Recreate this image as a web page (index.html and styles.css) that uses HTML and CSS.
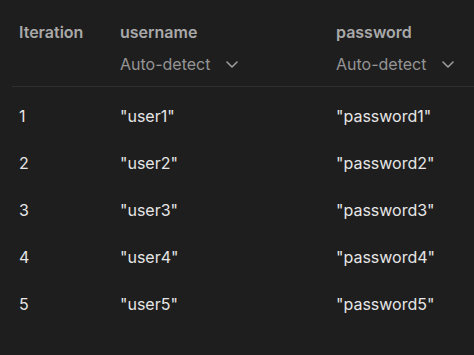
FILE: index.html
```html
<!DOCTYPE html>
<html lang="en">
<head>
    <meta charset="UTF-8">
    <meta name="viewport" content="width=device-width, initial-scale=1.0">
    <title>Iterations</title>
    <link rel="stylesheet" href="styles.css">
</head>
<body>
    <div class="table">
        <div class="head">
            <div class="cell">
                <div class="col-name">Iteration</div>
            </div>
            <div class="cell">
                <div class="col-name">username</div>
                <div class="detect">Auto-detect
                    <svg class="chevron" width="12" height="7" viewBox="0 0 12 7"><path d="M1 1l5 5 5-5" fill="none" stroke="currentColor" stroke-width="1.5" stroke-linecap="round" stroke-linejoin="round"/></svg>
                </div>
            </div>
            <div class="cell">
                <div class="col-name">password</div>
                <div class="detect">Auto-detect
                    <svg class="chevron" width="12" height="7" viewBox="0 0 12 7"><path d="M1 1l5 5 5-5" fill="none" stroke="currentColor" stroke-width="1.5" stroke-linecap="round" stroke-linejoin="round"/></svg>
                </div>
            </div>
        </div>
        <div class="rows">
            <div class="row"><div class="cell">1</div><div class="cell">"user1"</div><div class="cell">"password1"</div></div>
            <div class="row"><div class="cell">2</div><div class="cell">"user2"</div><div class="cell">"password2"</div></div>
            <div class="row"><div class="cell">3</div><div class="cell">"user3"</div><div class="cell">"password3"</div></div>
            <div class="row"><div class="cell">4</div><div class="cell">"user4"</div><div class="cell">"password4"</div></div>
            <div class="row"><div class="cell">5</div><div class="cell">"user5"</div><div class="cell">"password5"</div></div>
        </div>
    </div>
</body>
</html>
```
FILE: styles.css
```css
body {
    margin: 0;
    background-color: #1e1e1e;
    font-family: 'Inter', 'Liberation Sans', sans-serif;
    font-size: 16px;
    overflow: hidden;
}
.table {
    padding-left: 12px;
}
.head,
.row {
    display: grid;
    grid-template-columns: 101px 216px 1fr;
}
.head {
    padding: 22px 0 12px;
    border-bottom: 1px solid #2f2f2f;
}
.rows {
    padding-top: 5px;
}
.cell {
    padding-left: 7px;
}
.col-name {
    color: #a9a9a9;
    font-weight: 600;
    line-height: 20px;
}
.detect {
    margin-top: 12px;
    color: #959595;
    line-height: 20px;
    display: flex;
    align-items: center;
}
.chevron {
    color: #a0a0a0;
    margin-left: 16px;
}
.row {
    color: #e6e6e6;
    height: 47px;
    align-items: center;
}
```
